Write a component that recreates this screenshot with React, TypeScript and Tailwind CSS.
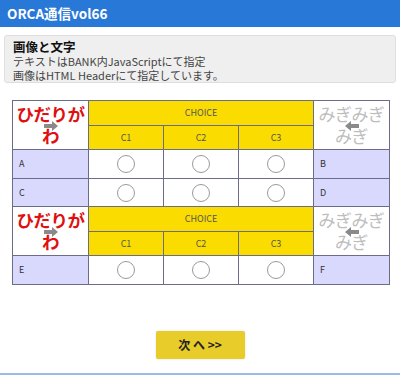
import React from 'react';

const font = { fontFamily: '"Noto Sans CJK JP", "Noto Sans", sans-serif' };

function Arrow({ dir }: { dir: 'left' | 'right' }) {
    return (
        <svg width="14" height="10" viewBox="0 0 14 10" className="absolute left-1/2 top-1/2" style={{ transform: `translate(-50%, -40%) ${dir === 'left' ? 'scaleX(-1)' : ''}` }}>
            <path d="M0 3 H8 V0 L14 5 L8 10 V7 H0 Z" fill="#8a8a8a" />
        </svg>
    );
}

function Circle() {
    return <div className="mx-auto w-[18px] h-[18px] rounded-full border border-[#9a9a9a] bg-white" />;
}

function HeaderRows() {
    return (
        <>
            <tr className="h-[25px]">
                <td rowSpan={2} className="relative border border-[#6b6b8a] bg-white p-0 text-center leading-[22px] text-[17.5px] font-bold tracking-[-0.5px] text-[#e01010]">
                    ひだりが<br />わ
                    <Arrow dir="right" />
                </td>
                <td colSpan={3} className="border border-[#6b6b8a] bg-[#fadc00] text-center text-[9px] text-[#555]">CHOICE</td>
                <td rowSpan={2} className="relative border border-[#6b6b8a] bg-white p-0 text-center leading-[22px] text-[17px] tracking-[-0.5px] text-[#bdbdbd]">
                    みぎみぎ<br />みぎ
                    <Arrow dir="left" />
                </td>
            </tr>
            <tr className="h-[24px]">
                {['C1', 'C2', 'C3'].map((c) => (
                    <td key={c} className="border border-[#6b6b8a] bg-[#fadc00] text-center text-[9px] text-[#555]">{c}</td>
                ))}
            </tr>
        </>
    );
}

function ChoiceRow({ left, right, h }: { left: string; right: string; h: string }) {
    return (
        <tr className={h}>
            <td className="border border-[#6b6b8a] bg-[#d9d9fd] pl-1.5 text-[9px] text-[#333]">{left}</td>
            <td className="border border-[#6b6b8a] bg-white"><Circle /></td>
            <td className="border border-[#6b6b8a] bg-white"><Circle /></td>
            <td className="border border-[#6b6b8a] bg-white"><Circle /></td>
            <td className="border border-[#6b6b8a] bg-[#d9d9fd] pl-1.5 text-[9px] text-[#333]">{right}</td>
        </tr>
    );
}

export default function App() {
    return (
        <div className="w-[400px] h-[385px] bg-white flex flex-col" style={font}>
            <div className="h-[27px] bg-[#2878d8] flex items-center px-[7px]">
                <span className="text-white font-bold text-[13.5px]">ORCA通信vol66</span>
            </div>

            <div className="mx-[4px] mt-[8px] h-[48px] rounded-[3px] border border-[#dedede] bg-[#efefef] px-[8px] pt-[3px] text-[11px] leading-[14px] text-[#444]">
                <div className="font-bold text-[12.5px] leading-[15px] text-[#111]">画像と文字</div>
                <div>テキストはBANK内JavaScriptにて指定</div>
                <div>画像はHTML Headerにて指定しています。</div>
            </div>

            <div className="mt-[17px] px-[12px]">
                <table className="w-[377px] table-fixed border-collapse">
                    <colgroup>
                        <col className="w-[76px]" />
                        <col className="w-[75px]" />
                        <col className="w-[75px]" />
                        <col className="w-[75px]" />
                        <col className="w-[76px]" />
                    </colgroup>
                    <tbody>
                        <HeaderRows />
                        <ChoiceRow left="A" right="B" h="h-[29px]" />
                        <ChoiceRow left="C" right="D" h="h-[28px]" />
                        <HeaderRows />
                        <ChoiceRow left="E" right="F" h="h-[29px]" />
                    </tbody>
                </table>
            </div>

            <div className="flex justify-center mt-[46px]">
                <button className="w-[89px] h-[28px] rounded-[2px] bg-[#e8cc2a] text-[12px] font-bold text-[#222] shadow-[0_0_2px_rgba(0,0,0,0.15)]">
                    次 へ &gt;&gt;
                </button>
            </div>

            <div className="mt-auto mb-[10px] h-[2px] bg-[#9cbbe3]" />
        </div>
    );
}
